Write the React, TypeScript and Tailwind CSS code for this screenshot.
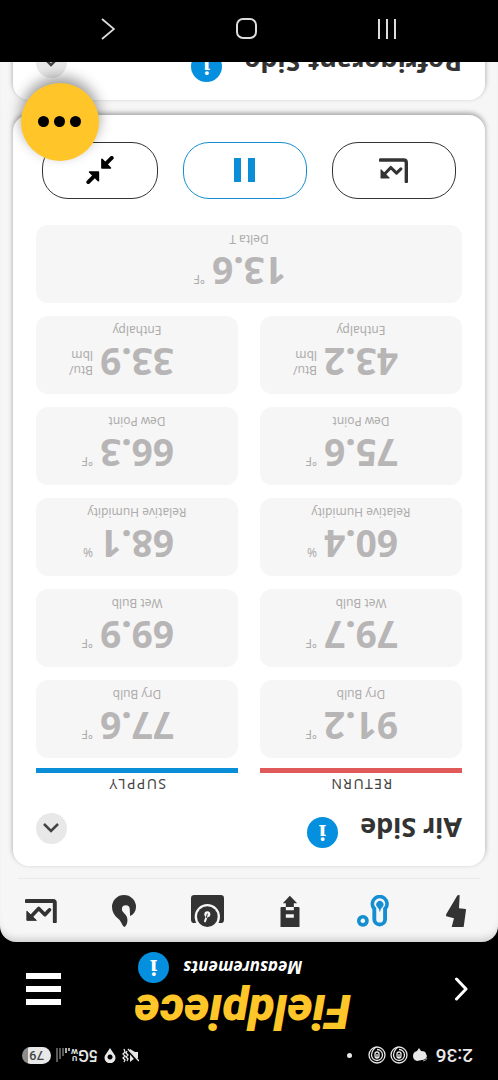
import React from 'react';

interface Reading {
  label: string;
  value: string;
  unit: string[];
}

const returnReadings: Reading[] = [
  { label: 'Dry Bulb', value: '91.2', unit: ['°F'] },
  { label: 'Wet Bulb', value: '79.7', unit: ['°F'] },
  { label: 'Relative Humidity', value: '60.4', unit: ['%'] },
  { label: 'Dew Point', value: '75.6', unit: ['°F'] },
  { label: 'Enthalpy', value: '43.2', unit: ['Btu/', 'lbm'] },
];

const supplyReadings: Reading[] = [
  { label: 'Dry Bulb', value: '77.6', unit: ['°F'] },
  { label: 'Wet Bulb', value: '69.9', unit: ['°F'] },
  { label: 'Relative Humidity', value: '68.1', unit: ['%'] },
  { label: 'Dew Point', value: '66.3', unit: ['°F'] },
  { label: 'Enthalpy', value: '33.9', unit: ['Btu/', 'lbm'] },
];

const ChartIcon = ({ className }: { className: string }) => (
  <svg viewBox="0 0 96 73" className={className} fill="none" stroke="currentColor">
    <path d="M6 4V62Q6 67 11 67H92" strokeWidth="12" strokeLinecap="round" />
    <path d="M22 40L36 25L55 44L78 20" strokeWidth="11" strokeLinecap="round" strokeLinejoin="round" />
    <path d="M62 8H91V36Z" fill="currentColor" strokeWidth="3" strokeLinejoin="round" />
  </svg>
);

// Narrower version used inside the round buttons
const SmallChartIcon = () => (
  <svg viewBox="0 0 86 74" className="h-[25px] w-[29px]" fill="none" stroke="currentColor">
    <path d="M5 4V60Q5 68 13 68H82" strokeWidth="10" strokeLinecap="round" />
    <path d="M21 42L34 29L51 46L68 28" strokeWidth="9" strokeLinecap="round" strokeLinejoin="round" />
    <path d="M56 15H80V39Z" fill="currentColor" strokeWidth="3" strokeLinejoin="round" />
  </svg>
);

const BoltIcon = () => (
  <svg viewBox="0 0 60 96" className="h-8 w-5" fill="currentColor">
    <path d="M7 0H43L36 26L59 32Q61 35 59 39L27 93Q24 97 19 95L21 56L1 54Q0 53 0 51Z" />
  </svg>
);

const ProbeIcon = () => (
  <svg viewBox="0 0 98 96" className="h-8 w-8" fill="currentColor">
    <path
      fillRule="evenodd"
      d="M6 23A22.500 22.500 0 0 1 51 23V53A28 28 0 1 1 6 53ZM18 23V57A17 17 0 1 0 39 57V23A10.500 10.500 0 0 0 18 23Z"
    />
    <path d="M28 44Q30 56 36 60A11 11 0 1 1 20 60Q26 56 28 44Z" />
    <path fillRule="evenodd" d="M80 0A18 18 0 1 1 79.900 0ZM80 11A7 7 0 1 0 80.100 11Z" />
  </svg>
);

const DownloadIcon = () => (
  <svg viewBox="0 0 57 96" className="h-8 w-5" fill="currentColor">
    <path
      fillRule="evenodd"
      d="M0 0H57V57Q57 60 54 60H41V71H50L29 94L7 71H17V60H3Q0 60 0 57ZM17 28V38H41V28ZM17 50V60H41V50Z"
    />
  </svg>
);

const GaugeIcon = () => (
  <svg viewBox="0 0 99 96" className="h-8 w-[33px]" fill="currentColor">
    <rect x="0" y="12" width="99" height="84" rx="10" />
    <circle cx="50" cy="31" r="38" fill="#f6f6f6" />
    <circle cx="50" cy="31" r="31" />
    <circle cx="50" cy="38" r="9" fill="#f6f6f6" />
    <path d="M50 38L57 17" stroke="#f6f6f6" strokeWidth="6" strokeLinecap="round" />
    <path d="M50 39L53 28" stroke="currentColor" strokeWidth="3" strokeLinecap="round" />
  </svg>
);

const HookIcon = () => (
  <svg viewBox="0 0 73 97" className="h-8 w-6" fill="currentColor">
    <path d="M36 0C42 3 44 16 53 24C66 34 73 47 73 61A36.500 36 0 0 1 0 61C0 49 6 39 18 33L19 54A12 12 0 0 0 43 54C43 42 24 40 26 18C27 9 30 2 36 0Z" />
  </svg>
);

const CollapseIcon = () => (
  <svg viewBox="0 0 84 86" className="h-7 w-7" fill="currentColor" stroke="currentColor" strokeLinejoin="round" strokeLinecap="round">
    <path d="M6 80L28 58M78 6L56 28" strokeWidth="12" />
    <path d="M36 76V49H10ZM47 10V37H74Z" strokeWidth="5" />
  </svg>
);

const InfoButton = ({ label }: { label: string }) => (
  <button
    aria-label={label}
    className="flex h-[31px] w-[31px] shrink-0 items-center justify-center rounded-full bg-[#048fdf] font-['DejaVu_Serif',serif] text-xl leading-none font-bold text-white"
  >
    i
  </button>
);

const tabs = [
  { name: 'Power', icon: <BoltIcon /> },
  { name: 'Probes', icon: <ProbeIcon />, active: true },
  { name: 'Tank', icon: <DownloadIcon /> },
  { name: 'Gauge', icon: <GaugeIcon /> },
  { name: 'Clamp', icon: <HookIcon /> },
  { name: 'Chart', icon: <ChartIcon className="h-6 w-8" /> },
];

const StatusBar = () => (
  <div className="flex h-[49px] items-center justify-between pr-[22px] pl-[25px] font-[Roboto,sans-serif] text-[#e8e8e8]">
    <div className="flex items-center gap-1">
      <span className="mr-1 text-[19px] leading-6 font-medium">2:36</span>
      <svg viewBox="0 0 16 16" className="h-4 w-4" fill="currentColor">
        <path d="M1 7Q2 3 6 3L11 2Q15 3 15 7Q15 11 11 12L9 15L7 12Q2 12 2 9Z" />
        <path d="M1 5Q2 2 5 2" fill="none" stroke="#999999" />
      </svg>
      {[0, 1].map((i) => (
        <svg key={i} viewBox="0 0 18 18" className="h-[18px] w-[18px]" fill="none" stroke="currentColor" strokeWidth="1.300">
          <circle cx="9" cy="9" r="8" />
          <path d="M9 14.500A5.500 5.500 0 1 1 14.500 9Q14 14 10 17M7 11V8Q7 6 9 6T11 8V10Q11 12 9 12T7 10M9 6V10" />
        </svg>
      ))}
      <span className="ml-3 h-[5px] w-[5px] rounded-full bg-current" />
    </div>
    <div className="flex items-center">
      <svg viewBox="0 0 17 16" className="mr-1.5 h-4 w-[17px]" fill="currentColor">
        <path d="M1 5H4L9 1V14L4 11H1Z" />
        <path d="M1 1L12 14" stroke="#000000" strokeWidth="2.500" />
        <path d="M0 2L11 14" stroke="currentColor" strokeWidth="1.500" />
        <path d="M12 2L11 4L13 6L11 8L13 10L12 12M15 1L14 3L16 5L14 7L16 9L14 11L15 14" fill="none" stroke="currentColor" strokeWidth="1.300" />
      </svg>
      <svg viewBox="0 0 12 16" className="mr-1.5 h-4 w-3" fill="currentColor">
        <path fillRule="evenodd" d="M6 15L10 9A5.500 5.500 0 1 0 2 9ZM6 3.500A2.500 2.500 0 1 1 5.900 3.500Z" />
      </svg>
      <span className="text-base leading-5 font-medium">5G</span>
      <span className="flex flex-col items-center text-[8px] leading-[7px] font-bold">
        <span>U</span>
        <span>W</span>
      </span>
      <svg viewBox="0 0 16 16" className="mr-1 h-4 w-4">
        <path d="M2 12V15M5 10V15" stroke="#e8e8e8" strokeWidth="1.500" />
        <path d="M8 7V15M11 4V15M14 1V15" stroke="#777777" strokeWidth="1.500" />
      </svg>
      <span className="flex h-[17px] w-[29px] items-center justify-center rounded-full bg-linear-to-r from-[#e8e8e8] from-78% to-[#8c8c8c] to-78% text-[13px] leading-none font-medium text-[#444444]">
        79
      </span>
    </div>
  </div>
);

const Header = () => (
  <header className="flex items-center justify-between pr-[26px] pb-1.5 pl-[30px] text-white">
    <button aria-label="Back" className="w-11">
      <svg viewBox="0 0 13 24" className="h-6 w-[13px]" fill="none" stroke="currentColor" strokeWidth="3" strokeLinecap="round" strokeLinejoin="round">
        <path d="M11.500 2L2 12L11.500 22" />
      </svg>
    </button>
    <div className="flex flex-col items-end pb-1">
      <h1 className="font-[Roboto,sans-serif] text-5xl leading-10 font-black text-[#ffc629] italic">Fieldpiece</h1>
      <div className="mt-2 mr-1 flex items-center gap-3.5">
        <span className="text-[17px] leading-6 font-bold italic">Measurements</span>
        <InfoButton label="About measurements" />
      </div>
    </div>
    <button aria-label="Menu" className="flex w-[35px] flex-col gap-[7px]">
      <span className="h-1.5 w-full bg-white" />
      <span className="h-1.5 w-full bg-white" />
      <span className="h-1.5 w-full bg-white" />
    </button>
  </header>
);

const SectionHeader = ({ title }: { title: string }) => (
  <div className="flex items-start">
    <h2 className="mt-0.5 text-[27px] leading-9 font-bold text-[#333333]">{title}</h2>
    <div className="ml-[22px]">
      <InfoButton label={`About ${title}`} />
    </div>
    <button aria-label={`Collapse ${title}`} className="mt-1 ml-auto flex h-[31px] w-[31px] items-center justify-center rounded-full bg-[#e8e8e8] text-[#444444]">
      <svg viewBox="0 0 16 10" className="h-2.5 w-4" fill="none" stroke="currentColor" strokeWidth="2.500">
        <path d="M1 9L8 2L15 9" />
      </svg>
    </button>
  </div>
);

const ReadingCard = ({ reading }: { reading: Reading }) => (
  <div className="rounded-xl bg-[#f6f6f6] pt-3 pb-1.5 text-[#b7b5b5]">
    <div className="grid grid-cols-[1fr_auto_1fr] gap-x-[7px]">
      <span className="col-start-2 text-[37px] leading-10 font-bold">{reading.value}</span>
      <span className="mt-1 flex flex-col text-xs leading-[15px] text-[#aeacac]">
        {reading.unit.map((line) => (
          <span key={line}>{line}</span>
        ))}
      </span>
    </div>
    <div className="mt-1 text-center text-xs leading-4 text-[#aeacac]">{reading.label}</div>
  </div>
);

interface ReadingColumnProps {
  title: string;
  barClass: string;
  readings: Reading[];
}

const ReadingColumn = ({ title, barClass, readings }: ReadingColumnProps) => (
  <section>
    <h3 className="text-center text-sm leading-5 tracking-widest text-[#444444]">{title}</h3>
    <div className={`mt-px h-[5px] ${barClass}`} />
    <div className="mt-2.5 flex flex-col gap-[13px]">
      {readings.map((reading) => (
        <ReadingCard key={reading.label} reading={reading} />
      ))}
    </div>
  </section>
);

const cardClass = 'mx-[13px] rounded-2xl bg-white px-[23px] pt-[18px] shadow-[0_2px_5px_rgba(0,0,0,0.35)]';

export default function App() {
  return (
    <div className="flex h-screen rotate-180 flex-col overflow-hidden bg-black font-['Noto_Sans',sans-serif]">
      <StatusBar />
      <Header />

      <main className="relative min-h-0 flex-1 overflow-hidden rounded-t-2xl bg-[#f6f6f6] shadow-[inset_0_8px_8px_-6px_rgba(0,0,0,0.2)]">
        <nav className="grid grid-cols-6 pt-[15px] pb-4">
          {tabs.map((tab) => (
            <button
              key={tab.name}
              aria-label={tab.name}
              className={`flex h-8 items-center justify-center ${tab.active ? 'text-[#158fd2]' : 'text-[#333333]'}`}
            >
              {tab.icon}
            </button>
          ))}
        </nav>
        <div className="mx-[18px] h-px bg-[#eaeaea]" />

        {/* Air side */}
        <div className={`mt-3 pb-[27px] ${cardClass}`}>
          <SectionHeader title="Air Side" />
          <div className="mt-4 grid grid-cols-2 gap-x-[22px]">
            <ReadingColumn title="RETURN" barClass="bg-[#e05a5a]" readings={returnReadings} />
            <ReadingColumn title="SUPPLY" barClass="bg-[#0b8ed8]" readings={supplyReadings} />
          </div>
          <div className="mt-[13px]">
            <ReadingCard reading={{ label: 'Delta T', value: '13.6', unit: ['°F'] }} />
          </div>

          <div className="mx-1.5 mt-[26px] grid grid-cols-[31fr_31fr_29fr] gap-x-[25px]">
            <button aria-label="Show chart" className="flex h-[57px] items-center justify-center rounded-[26px] border border-[#333333] text-[#333333]">
              <SmallChartIcon />
            </button>
            <button aria-label="Pause" className="flex h-[57px] items-center justify-center gap-[7px] rounded-[26px] border border-[#158fd2]">
              <span className="h-6 w-[7px] bg-[#0b8ed8]" />
              <span className="h-6 w-[7px] bg-[#0b8ed8]" />
            </button>
            <button aria-label="Shrink" className="flex h-[57px] items-center justify-center rounded-[26px] border border-[#333333] text-black">
              <CollapseIcon />
            </button>
          </div>
        </div>

        {/* Refrigerant side, continues below the fold */}
        <div className={`mt-[15px] pb-6 ${cardClass}`}>
          <SectionHeader title="Refrigerant Side" />
        </div>

        <button
          aria-label="More actions"
          className="absolute right-[21px] bottom-[21px] flex h-[78px] w-[78px] items-center justify-center gap-[5px] rounded-full bg-[#ffc529] shadow-[0_6px_14px_rgba(0,0,0,0.4)]"
        >
          <span className="h-[11px] w-[11px] rounded-full bg-black" />
          <span className="h-[11px] w-[11px] rounded-full bg-black" />
          <span className="h-[11px] w-[11px] rounded-full bg-black" />
        </button>
      </main>

      {/* System navigation */}
      <div className="flex h-[62px] items-center justify-center gap-[121px] pt-1 text-[#dddddd]">
        <button aria-label="Recent apps" className="flex gap-1.5">
          <span className="h-5 w-0.5 bg-current" />
          <span className="h-5 w-0.5 bg-current" />
          <span className="h-5 w-0.5 bg-current" />
        </button>
        <button aria-label="Home" className="h-[21px] w-[21px] rounded-[7px] border-2 border-current" />
        <button aria-label="System back">
          <svg viewBox="0 0 14 22" className="h-[22px] w-3.5" fill="none" stroke="currentColor" strokeWidth="1.800">
            <path d="M13 1L1 11L13 21" />
          </svg>
        </button>
      </div>
    </div>
  );
}
